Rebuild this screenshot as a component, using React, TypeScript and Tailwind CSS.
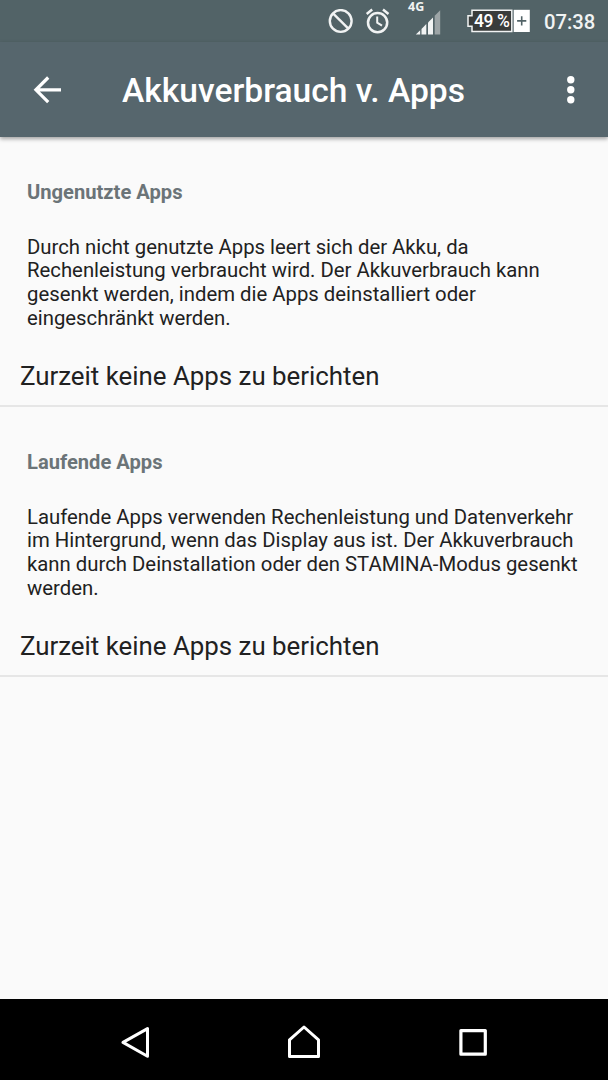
import React from 'react';

const SECTIONS = [
  {
    id: 'unused',
    title: 'Ungenutzte Apps',
    lines: [
      'Durch nicht genutzte Apps leert sich der Akku, da',
      'Rechenleistung verbraucht wird. Der Akkuverbrauch kann',
      'gesenkt werden, indem die Apps deinstalliert oder',
      'eingeschränkt werden.',
    ],
  },
  {
    id: 'running',
    title: 'Laufende Apps',
    lines: [
      'Laufende Apps verwenden Rechenleistung und Datenverkehr',
      'im Hintergrund, wenn das Display aus ist. Der Akkuverbrauch',
      'kann durch Deinstallation oder den STAMINA-Modus gesenkt',
      'werden.',
    ],
  },
];

const StatusBar = () => {
  return (
    <div className="flex h-[42px] shrink-0 items-start bg-[#526367] pl-[328px] text-[#f1f3f3]">
      {/* Do not disturb */}
      <svg className="mt-[9px] h-[25px] w-[25px]" viewBox="0 0 25 25" fill="none" stroke="currentColor" strokeWidth="2.4">
        <circle cx="12.7" cy="12" r="10.9" />
        <path d="M5 4.3 20.4 19.7" />
      </svg>
      {/* Alarm */}
      <svg className="ml-3 mt-2 h-[27px] w-[25px]" viewBox="0 0 25 27" fill="none" stroke="currentColor">
        <circle cx="12.6" cy="14.6" r="9.6" strokeWidth="2.5" />
        <path d="M12.2 8.5v6.2l4.8 3" strokeWidth="2" />
        <path d="M1.7 6 7.2 1.6M23.5 6 18 1.6" strokeWidth="2.5" />
      </svg>
      {/* Mobile signal */}
      <div className="ml-[17px] h-[36px] w-[35px]">
        <div className="ml-px text-[12.5px] leading-[14px] font-bold font-['Open_Sans',sans-serif]">4G</div>
        <svg className="ml-2 -mt-[6px] h-[27px] w-[26px]" viewBox="0 0 26 27">
          <path d="M0.8 26.5 5.2 22.2V26.5Z" fill="currentColor" />
          <path d="M6.5 20.9 11.3 16.1V26.5H6.5Z" fill="currentColor" />
          <path d="M13 14.4 18 9.4V26.5H13Z" fill="currentColor" />
          <path d="M19.7 7.8 25.2 2.3V26.5H19.7Z" fill="#9ca4a6" />
        </svg>
      </div>
      {/* Battery */}
      <div className="relative ml-[25px] mt-[9px] h-6 w-[63px]">
        <svg className="h-6 w-[63px]" viewBox="0 0 63 24">
          <path d="M5 1.3H44.8V22.4H5V17.3H1V6.8H5Z" fill="#393c3b" stroke="currentColor" strokeWidth="1.5" />
          <path d="M46.7 .8H62.8V23H46.7Z" fill="#fff" />
          <path d="M54.7 7.3V16.5M50.1 11.9H59.3" stroke="#526367" strokeWidth="1.6" />
        </svg>
        <span className="absolute left-[7px] top-0 whitespace-nowrap text-[17.5px] leading-6 font-medium tracking-[-0.4px] text-white">49 %</span>
      </div>
      <div className="ml-[14px] mt-[10px] text-[20.25px] leading-6 font-medium">07:38</div>
    </div>
  );
};

const AppBar = () => {
  return (
    <header className="z-10 flex h-[95px] shrink-0 items-center bg-[#56666d] pl-[33px] pr-[32px] text-white shadow-[0_2px_4px_rgba(0,0,0,0.35)]">
      <svg className="h-7 w-7" viewBox="0 0 28 28" fill="none" stroke="currentColor" strokeWidth="3.2">
        <path d="M28 13.8H3M15.2 1.5 2.9 13.8 15.2 26.1" />
      </svg>
      <h1 className="ml-[61px] mt-[3px] flex-1 whitespace-nowrap text-[33.6px] leading-10 font-medium">Akkuverbrauch v. Apps</h1>
      <svg className="h-7 w-[10px]" viewBox="0 0 10 28" fill="currentColor">
        <circle cx="4.8" cy="3.7" r="3.7" />
        <circle cx="4.8" cy="13.7" r="3.7" />
        <circle cx="4.8" cy="23.7" r="3.7" />
      </svg>
    </header>
  );
};

const NavBar = () => {
  return (
    <nav className="flex h-[81px] shrink-0 items-center bg-black px-[121px] text-white">
      <svg className="h-9 w-[29px]" viewBox="0 0 29 36" fill="none" stroke="currentColor" strokeWidth="3" strokeLinejoin="round">
        <path d="M26.5 6.6V34.2L2 20.4Z" />
      </svg>
      <svg className="ml-[137px] h-9 w-[34px]" viewBox="0 0 34 36" fill="none" stroke="currentColor" strokeWidth="3" strokeLinejoin="round">
        <path d="M2.5 17.8 17 5 31.5 17.8V34.4H2.5Z" />
      </svg>
      <svg className="ml-[138px] h-9 w-[28px]" viewBox="0 0 28 36" fill="none" stroke="currentColor" strokeWidth="3.2" strokeLinejoin="round">
        <path d="M1.9 8.6H26.3V32.2H1.9Z" />
      </svg>
    </nav>
  );
};

export default function App() {
  return (
    <div className="flex h-[1080px] w-[608px] flex-col overflow-hidden bg-[#fafafa] font-[Roboto,sans-serif]">
      <StatusBar />
      <AppBar />
      <main className="flex-1">
        {SECTIONS.map((section) => (
          <section key={section.id} className="h-[270px] border-b-2 border-[#e6e6e6] pt-[43px] text-[#212121]">
            <h2 className="pl-[27px] text-[20.15px] leading-6 font-bold text-[#6b7478]">{section.title}</h2>
            <p className="mt-[31.6px] pl-[27px] text-[20.32px] leading-[23.7px]">
              {section.lines.map((line) => (
                <span key={line} className="block whitespace-nowrap">{line}</span>
              ))}
            </p>
            <p className="mt-[29.4px] pl-5 text-[25.85px] leading-8">Zurzeit keine Apps zu berichten</p>
          </section>
        ))}
      </main>
      <NavBar />
    </div>
  );
}
